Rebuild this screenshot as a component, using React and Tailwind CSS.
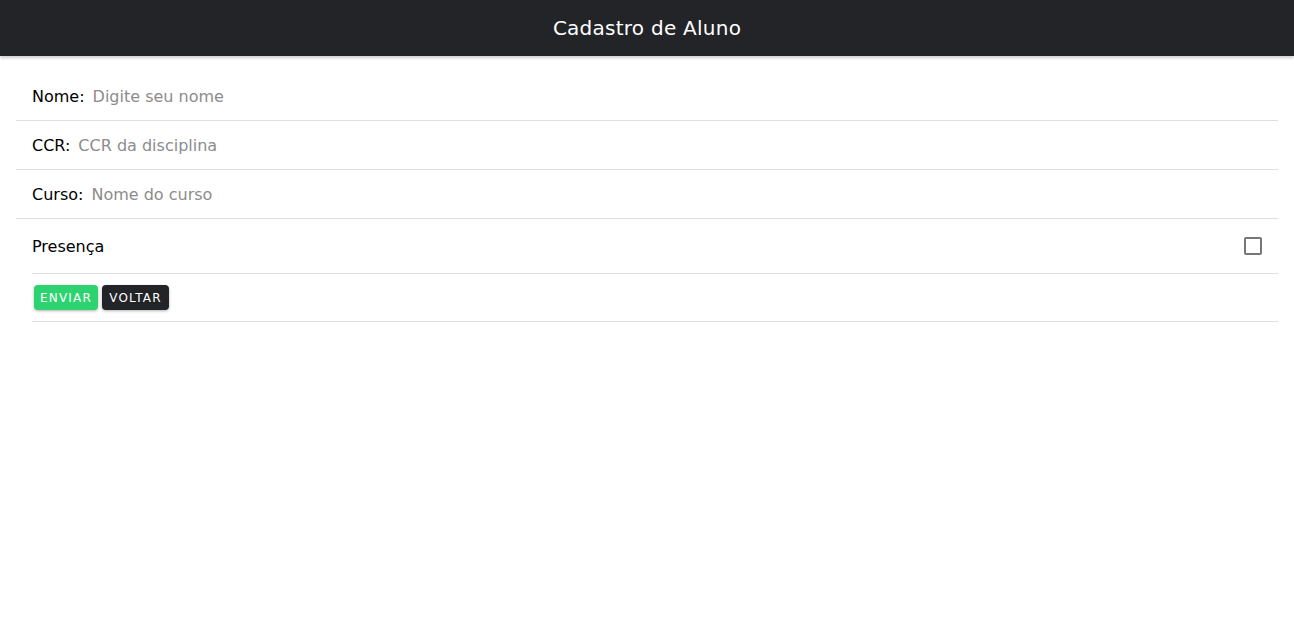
import { useState } from "react";

function InputRow({ label, placeholder, value, onChange }) {
    return (
        <div className="flex items-center h-[49px] pl-4 border-b border-[#dedede]">
            <label className="text-base text-black mr-2 mt-[2px] whitespace-nowrap">
                {label}
            </label>
            <input
                value={value}
                onChange={onChange}
                placeholder={placeholder}
                className="flex-1 h-full bg-transparent outline-none text-base text-black placeholder:text-[#8c8c8c]"
            />
        </div>
    );
}

function App() {
    const [nome, setNome] = useState("");
    const [ccr, setCcr] = useState("");
    const [curso, setCurso] = useState("");
    const [presenca, setPresenca] = useState(false);

    return (
        <div className="min-h-screen bg-white font-['DejaVu_Sans',sans-serif]">
            <header className="h-14 bg-[#222428] flex items-center justify-center shadow-[0_2px_3px_rgba(0,0,0,0.2)] relative">
                <h1 className="text-white text-xl tracking-[0.25px]">Cadastro de Aluno</h1>
            </header>

            <form className="pt-4 pl-4 pr-4" onSubmit={(e) => e.preventDefault()}>
                <InputRow
                    label="Nome:"
                    placeholder="Digite seu nome"
                    value={nome}
                    onChange={(e) => setNome(e.target.value)}
                />
                <InputRow
                    label="CCR:"
                    placeholder="CCR da disciplina"
                    value={ccr}
                    onChange={(e) => setCcr(e.target.value)}
                />
                <InputRow
                    label="Curso:"
                    placeholder="Nome do curso"
                    value={curso}
                    onChange={(e) => setCurso(e.target.value)}
                />

                <div className="pl-4">
                    <div className="flex items-center justify-between h-[55px] pr-4 border-b border-[#dedede]">
                        <span className="text-base text-black mt-[2px]">Presença</span>
                        <button
                            type="button"
                            onClick={() => setPresenca(!presenca)}
                            className={`w-[18px] h-[18px] rounded-[2px] border-2 ${
                                presenca
                                    ? "bg-[#3880ff] border-[#3880ff]"
                                    : "border-[#777777] bg-white"
                            }`}
                        ></button>
                    </div>
                    <div className="flex items-center h-[48px] border-b border-[#dedede]">
                        <button
                            type="submit"
                            className="ml-[2px] h-[25px] w-[64px] rounded bg-[#2dd36f] text-white text-xs tracking-[0.1em] shadow-[0_1px_3px_rgba(0,0,0,0.3)]">
                            ENVIAR
                        </button>
                        <button
                            type="button"
                            className="ml-1 h-[25px] w-[67px] rounded bg-[#222428] text-white text-xs tracking-[0.1em] shadow-[0_1px_3px_rgba(0,0,0,0.3)]">
                            VOLTAR
                        </button>
                    </div>
                </div>
            </form>
        </div>
    );
}

export default App;
